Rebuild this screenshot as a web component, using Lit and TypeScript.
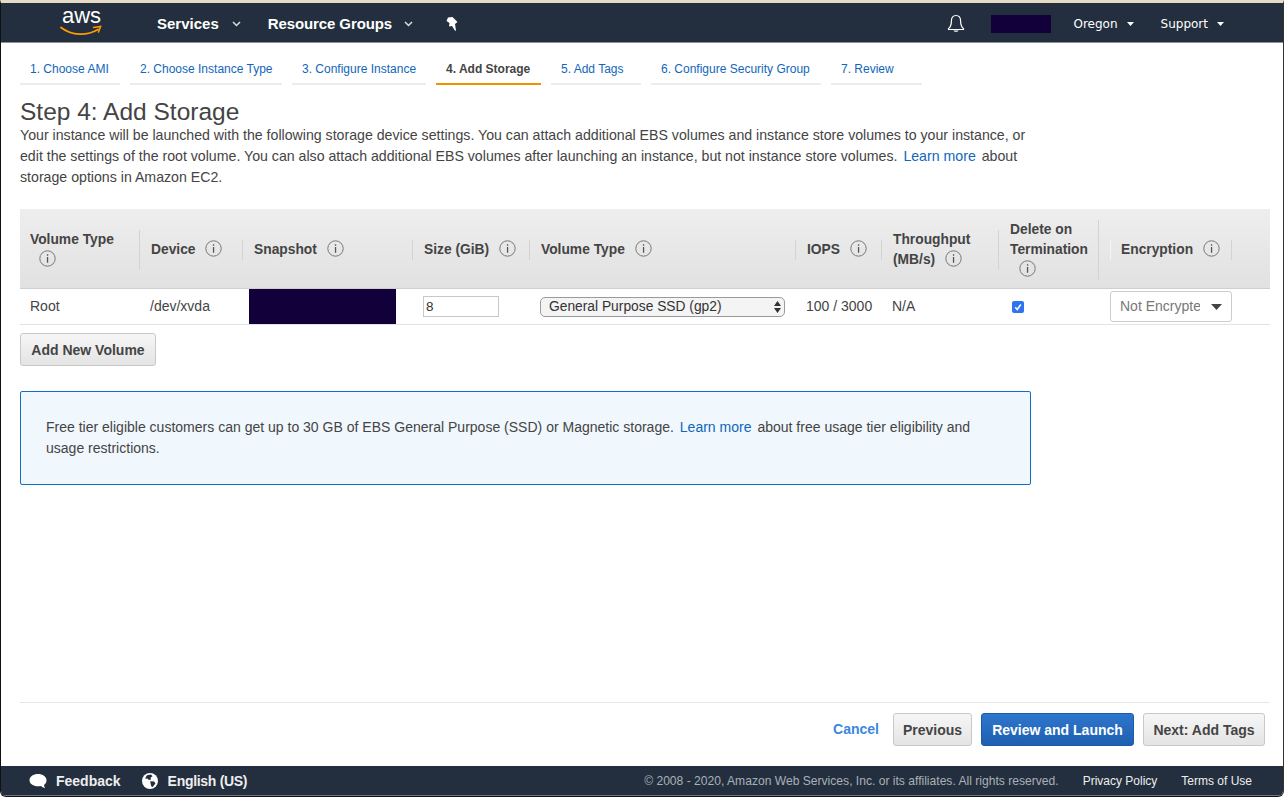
import { LitElement, html, css } from "lit";
import { customElement } from "lit/decorators.js";

const chevron = html`<svg class="chev" viewBox="0 0 9 6" width="9" height="6"><path d="M1 1l3.500 3.500L8 1" fill="none" stroke="currentColor" stroke-width="1.500"/></svg>`;
const caret = html`<svg class="caret" viewBox="0 0 7 4" width="7" height="4"><path d="M0 0h7L3.500 4z" fill="currentColor"/></svg>`;
const info = html`<svg class="info" viewBox="0 0 17 17" width="17" height="17"><circle cx="8.5" cy="8.5" r="7.7" fill="none" stroke="#777" stroke-width="1"/><path d="M7.9 4.2h1.3v1.5H7.9zM7.9 7h1.3v5.8H7.9z" fill="#555"/></svg>`;

const tabs = [
  { label: "1. Choose AMI", width: 100 },
  { label: "2. Choose Instance Type", width: 152 },
  { label: "3. Configure Instance", width: 134 },
  { label: "4. Add Storage", width: 105, active: true },
  { label: "5. Add Tags", width: 90 },
  { label: "6. Configure Security Group", width: 170 },
  { label: "7. Review", width: 91 },
];

@customElement("app-root")
export class AppRoot extends LitElement {
  protected render() {
    return html`
      <div class="window">
        <header class="topnav">
          <svg class="logo" viewBox="0 0 42 26" width="42" height="26">
            <text x="2" y="13" class="logo-text">aws</text>
            <path d="M1 17.500C12 26 27 26 38 19.500" fill="none" stroke="#f90" stroke-width="1.800" stroke-linecap="round"/>
            <path d="M33.500 17.500L40.500 16.500 38.500 22" fill="none" stroke="#f90" stroke-width="1.600" stroke-linecap="round"/>
          </svg>
          <a class="nav-main services">Services ${chevron}</a>
          <a class="nav-main groups">Resource Groups ${chevron}</a>
          <svg class="pin" viewBox="0 0 12 16" width="12" height="16"><path d="M2 1.500L6.500 1 11.500 6 9 8 10 14.500 9 14.800 6 10 3 10.500 3.500 7 .5 5z" fill="#fff"/></svg>
          <div class="spacer"></div>
          <svg class="bell" viewBox="0 0 18 20" width="18" height="20"><path d="M9 1.500c-3.200 0-4.600 2.600-4.600 5.400 0 3.600-.9 6-2.900 7.700v.9h15v-.9c-2-1.700-2.900-4.100-2.900-7.700 0-2.800-1.400-5.400-4.600-5.400z" fill="none" stroke="#fff" stroke-width="1.200"/><path d="M6.500 16.500h5c0 1.800-5 1.800-5 0z" fill="#fff"/></svg>
          <div class="redact account"></div>
          <a class="nav-side oregon">Oregon ${caret}</a>
          <a class="nav-side support">Support ${caret}</a>
        </header>

        <nav class="tabs">
          ${tabs.map(
            (t) => html`<a class="tab ${t.active ? "active" : ""}" style="width:${t.width}px">${t.label}</a>`
          )}
        </nav>

        <main class="content">
          <h1>Step 4: Add Storage</h1>
          <p class="intro">
            Your instance will be launched with the following storage device settings. You can attach additional EBS
            volumes and instance store volumes to your instance, or edit the settings of the root volume. You can also
            attach additional EBS volumes after launching an instance, but not instance store volumes.
            <a>Learn more</a> about storage options in Amazon EC2.
          </p>

          <div class="table">
            <div class="thead grid">
              <div class="th"><span class="lab">Volume Type<br /><i class="pad"></i>${info}</span></div>
              <div class="th"><span class="lab">Device ${info}</span></div>
              <div class="th"><span class="lab">Snapshot ${info}</span></div>
              <div class="th"><span class="lab">Size (GiB) ${info}</span></div>
              <div class="th"><span class="lab">Volume Type ${info}</span></div>
              <div class="th"><span class="lab">IOPS ${info}</span></div>
              <div class="th"><span class="lab">Throughput<br />(MB/s) ${info}</span></div>
              <div class="th"><span class="lab">Delete on<br />Termination<br /><i class="pad"></i>${info}</span></div>
              <div class="th enc-head"><span class="lab">Encryption ${info}</span></div>
            </div>
            <div class="tbody grid">
              <div class="td txt">Root</div>
              <div class="td txt">/dev/xvda</div>
              <div class="td snap"><div class="redact"></div></div>
              <div class="td"><input class="size" value="8" /></div>
              <div class="td">
                <div class="select">
                  <span>General Purpose SSD (gp2)</span>
                  <svg viewBox="0 0 7 12" width="7" height="12"><path d="M3.500 0L7 5H0zM3.500 12L0 7h7z" fill="#333"/></svg>
                </div>
              </div>
              <div class="td txt">100 / 3000</div>
              <div class="td txt">N/A</div>
              <div class="td">
                <span class="check">
                  <svg viewBox="0 0 12 12" width="12" height="12"><path d="M3.200 6.300l2 2.200 3.600-5" fill="none" stroke="#fff" stroke-width="1.500"/></svg>
                </span>
              </div>
              <div class="td">
                <div class="enc">
                  <span>Not Encrypted</span>
                  <svg viewBox="0 0 11 6" width="11" height="6"><path d="M0 0h11L5.500 6z" fill="currentColor"/></svg>
                </div>
              </div>
            </div>
          </div>

          <button class="btn add">Add New Volume</button>

          <div class="notice">
            Free tier eligible customers can get up to 30 GB of EBS General Purpose (SSD) or Magnetic storage.
            <a>Learn more</a> about free usage tier eligibility and usage restrictions.
          </div>

          <div class="spacer"></div>

          <div class="actions">
            <a class="cancel">Cancel</a>
            <button class="btn prev">Previous</button>
            <button class="btn primary">Review and Launch</button>
            <button class="btn next">Next: Add Tags</button>
          </div>
        </main>

        <footer class="foot">
          <svg viewBox="0 0 18 16" width="18" height="16"><path d="M9 1c4.700 0 8.500 2.700 8.500 6.200 0 2-.9 3.600-2.500 4.700.1 1.200.5 2.200 1.100 3.100-1.700-.3-3-1-4-2.100-.9.2-1.800.3-3.100.3C4.300 13.200.5 10.700.5 7.200.5 3.700 4.300 1 9 1z" fill="#fff"/></svg>
          <a class="foot-main feedback">Feedback</a>
          <svg viewBox="0 0 16 16" width="16" height="16"><circle cx="8" cy="8" r="8" fill="#fff"/><path d="M5 2.200l4-.6 1.500 1.700-2 1.500.6 1.700-2.300.6-1-1.400-2.800-.2zM8.200 8.300l4 .3 1.200 2-2.700 3.300-1.500-.7-.6-2.800z" fill="#232f3e"/></svg>
          <a class="foot-main lang">English (US)</a>
          <div class="spacer"></div>
          <span class="copy">© 2008 - 2020, Amazon Web Services, Inc. or its affiliates. All rights reserved.</span>
          <a class="foot-link">Privacy Policy</a>
          <a class="foot-link">Terms of Use</a>
        </footer>
      </div>
    `;
  }

  static styles = css`
    :host {
      display: block;
      font-family: "Liberation Sans", Arial, sans-serif;
      color: #444;
    }
    * {
      box-sizing: border-box;
    }
    a {
      color: #1166bb;
    }
    .spacer {
      flex: 1;
    }
    .window {
      height: 797px;
      display: flex;
      flex-direction: column;
      background: #fff;
      border-top: 3px solid #e6dcc6;
      border-left: 1px solid #111;
      border-right: 1px solid #333;
      border-bottom: 1px solid #111;
      border-radius: 0 0 6px 6px;
      overflow: hidden;
    }
    .topnav {
      flex: none;
      height: 40px;
      padding-top: 2px;
      background: #232f3e;
      border-bottom: 1px solid #8a929c;
      display: flex;
      align-items: center;
      color: #fff;
    }
    .logo {
      margin-left: 59px;
      margin-top: -2px;
      overflow: visible;
    }
    .logo-text {
      font: 22px "Liberation Sans", Arial, sans-serif;
      fill: #fff;
    }
    .nav-main {
      color: #fff;
      font-size: 15px;
      font-weight: 700;
      display: flex;
      align-items: center;
    }
    .nav-main .chev {
      margin-left: 13px;
      color: #ddd;
    }
    .services {
      margin-left: 55px;
    }
    .groups {
      margin-left: 27px;
      letter-spacing: -0.1px;
    }
    .groups .chev {
      margin-left: 12px;
    }
    .pin {
      margin-left: 33px;
    }
    .bell {
      margin-right: 26px;
    }
    .redact {
      background: #12003b;
    }
    .account {
      width: 60px;
      height: 18px;
      margin-right: 23px;
    }
    .nav-side {
      color: #fff;
      font: 12px "DejaVu Sans", Verdana, sans-serif;
      display: flex;
      align-items: center;
    }
    .nav-side .caret {
      margin-left: 9px;
    }
    .oregon {
      margin-right: 27px;
    }
    .support {
      margin-right: 59px;
    }
    .tabs {
      flex: none;
      display: flex;
      gap: 10px;
      margin: 12px 0 0 19px;
    }
    .tab {
      height: 30px;
      font-size: 12px;
      line-height: 28px;
      padding-left: 10px;
      white-space: nowrap;
      border-bottom: 2px solid #eaeded;
    }
    .tab.active {
      color: #444;
      font-weight: 700;
      border-bottom-color: #f29100;
    }
    .content {
      flex: 1;
      display: flex;
      flex-direction: column;
      padding: 0 13px 0 19px;
      min-height: 0;
    }
    h1 {
      margin: 14px 0 0;
      font-size: 24.5px;
      font-weight: 400;
      line-height: 26px;
      color: #444;
    }
    .intro {
      margin: 0;
      width: 1020px;
      font-size: 14.16px;
      line-height: 21px;
    }
    .intro a,
    .notice a {
      margin: 0 2px;
    }
    .table {
      margin-top: 21px;
      border-bottom: 1px solid #e1e4e5;
    }
    .grid {
      display: grid;
      grid-template-columns: 120px 103px 170px 117px 266px 86px 117px 100px 133px 38px;
    }
    .thead {
      height: 80px;
      padding-top: 2px;
      align-items: center;
      background: linear-gradient(#eeeeee, #e1e1e1);
      border-bottom: 1px solid #cfcfcf;
    }
    .th {
      font-size: 13.8px;
      font-weight: 700;
      line-height: 20px;
      color: #444;
    }
    .lab {
      display: block;
      padding: 0 0 0 10px;
      border-right: 1px solid #d3d3d3;
    }
    .th:nth-child(n + 2) .lab {
      padding-left: 11px;
    }
    .th.enc-head .lab {
      margin-left: 11px;
      padding-left: 10px;
      border-left: 1px solid #f5f5f5;
    }
    .pad {
      display: inline-block;
      width: 9px;
    }
    .info {
      vertical-align: -3px;
      margin-left: 6px;
    }
    .pad + .info {
      margin-left: 0;
    }
    .tbody {
      height: 35px;
      align-items: center;
      font-size: 14px;
    }
    .td {
      padding-left: 10px;
    }
    .td.txt {
      margin-top: -2px;
    }
    .snap {
      padding-left: 6px;
      align-self: stretch;
    }
    .snap .redact {
      width: 147px;
      height: 100%;
    }
    .size {
      display: block;
      width: 76px;
      height: 21px;
      border: 1px solid #c8c8c8;
      padding: 0 2px;
      font: 13.5px "Liberation Sans", Arial, sans-serif;
      color: #333;
      outline: none;
    }
    .select {
      width: 245px;
      height: 20px;
      border: 1px solid #9a9a9a;
      border-radius: 5px;
      background: #f4f4f4;
      color: #333;
      padding: 0 3px 1px 8px;
      display: flex;
      align-items: center;
      justify-content: space-between;
      font-size: 13.8px;
    }
    .select svg {
      margin-top: 1px;
    }
    .check {
      display: block;
      width: 12px;
      height: 12px;
      margin-left: 3px;
      border-radius: 2px;
      background: #2f73f2;
    }
    .check svg {
      display: block;
    }
    .enc {
      width: 122px;
      height: 31px;
      margin-left: 1px;
      border: 1px solid #ccc;
      border-radius: 3px;
      background: #fff;
      color: #777;
      display: flex;
      align-items: center;
      padding: 0 0 2px 9px;
    }
    .enc span {
      width: 80px;
      overflow: hidden;
      white-space: nowrap;
      flex: none;
    }
    .enc svg {
      margin: 2px 0 0 11px;
      color: #444;
    }
    .btn {
      font: 700 14px "Liberation Sans", Arial, sans-serif;
      color: #444;
      height: 33px;
      padding: 0;
      border: 1px solid #c8c8c8;
      border-radius: 3px;
      background: linear-gradient(#f6f6f6, #e4e4e4);
      white-space: nowrap;
    }
    .add {
      align-self: flex-start;
      width: 136px;
      margin-top: 8px;
    }
    .notice {
      margin-top: 25px;
      width: 1011px;
      height: 94px;
      padding: 25px 25px;
      background: #f0f7fd;
      border: 1px solid #0f6fc6;
      border-radius: 2px;
      font-size: 14.03px;
      line-height: 21px;
    }
    .actions {
      flex: none;
      height: 64px;
      border-top: 1px solid #e6e6e6;
      display: flex;
      align-items: flex-start;
      justify-content: flex-end;
      gap: 9px;
      padding: 10px 5px 0 0;
    }
    .cancel {
      font-size: 14px;
      font-weight: 700;
      color: #3a87e0;
      line-height: 33px;
      margin-right: 5px;
    }
    .prev {
      width: 79px;
    }
    .next {
      width: 122px;
    }
    .primary {
      color: #fff;
      background: linear-gradient(#2d76cd, #1f5fb0);
      border-color: #1a5cab;
      width: 153px;
    }
    .foot {
      flex: none;
      height: 30px;
      background: #232f3e;
      border-bottom: 1px solid #6f7782;
      display: flex;
      align-items: center;
      padding-left: 28px;
      color: #fff;
    }
    .foot-main {
      color: #eee;
      font-size: 14px;
      font-weight: 700;
    }
    .feedback {
      margin: 0 21px 0 9px;
    }
    .lang {
      margin-left: 10px;
      letter-spacing: -0.3px;
    }
    .copy {
      font-size: 12.1px;
      color: #aab0b8;
      margin-right: 24px;
    }
    .foot-link {
      font-size: 12px;
      color: #eee;
      margin-right: 24px;
    }
    .foot-link:last-child {
      margin-right: 31px;
    }
  `;
}
